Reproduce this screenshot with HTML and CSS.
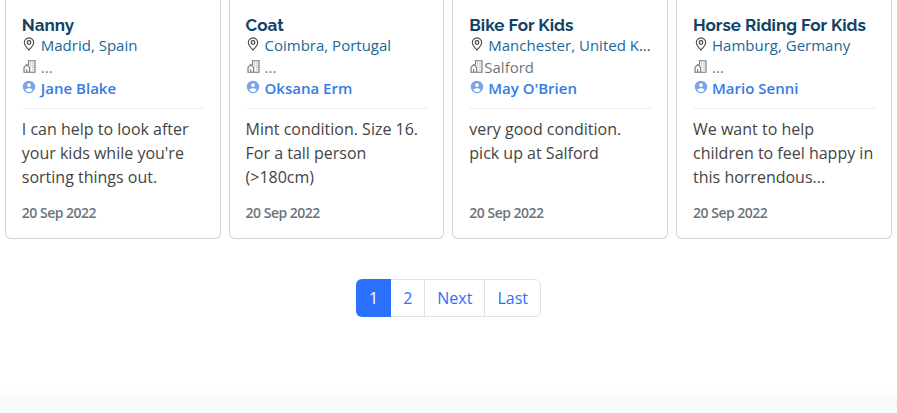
FILE: index.html
```html
<!DOCTYPE html>
<html lang="en">
<head>
<meta charset="utf-8">
<title>Listings</title>
<link rel="stylesheet" href="styles.css">
</head>
<body>
<svg class="sprite" aria-hidden="true">
  <symbol id="pin" viewBox="0 0 14 14"><path d="M7 .9a4.700 4.700 0 0 0-4.700 4.700C2.300 8.500 5.200 11.200 7 13c1.800-1.800 4.700-4.500 4.700-7.400A4.700 4.700 0 0 0 7 .9Z" fill="none" stroke="currentColor" stroke-width="1.100"/><circle cx="7" cy="5.500" r="1.800" fill="none" stroke="currentColor" stroke-width="1.200"/></symbol>
  <symbol id="building" viewBox="0 0 13 13"><path d="M5.500 5V.8h6.500v11.500H1V7.500L3.700 4.600l3 2.900v4.800M3.700 12.300V9.200" fill="none" stroke="currentColor" stroke-width="1.100"/><path d="M7.200 2.500h1v1h-1zM9.500 2.500h1v1h-1zM7.200 4.800h1v1h-1zM9.500 4.800h1v1h-1zM9.500 7.100h1v1h-1zM9.500 9.400h1v1h-1z" fill="currentColor"/></symbol>
  <symbol id="person" viewBox="0 0 14 14"><circle cx="7" cy="7" r="6.200" fill="currentColor"/><circle cx="7" cy="5.100" r="1.900" fill="#fff"/><path d="M3.300 10.200C3.800 8.700 5.500 8.200 7 8.200s3.200.5 3.700 2a4.700 4.700 0 0 1-7.400 0Z" fill="#fff"/></symbol>
</svg>
<main class="cards">
  <article class="card">
    <h2 class="title">Nanny</h2>
    <div class="meta place"><svg class="icon"><use href="#pin"/></svg><a class="label">Madrid, Spain</a></div>
    <div class="meta town"><svg class="icon"><use href="#building"/></svg><span class="label">...</span></div>
    <div class="meta owner"><svg class="icon"><use href="#person"/></svg><a class="label">Jane Blake</a></div>
    <p class="text">I can help to look after<br>your kids while you're<br>sorting things out.</p>
    <time class="date">20 Sep 2022</time>
  </article>
  <article class="card">
    <h2 class="title">Coat</h2>
    <div class="meta place"><svg class="icon"><use href="#pin"/></svg><a class="label">Coimbra, Portugal</a></div>
    <div class="meta town"><svg class="icon"><use href="#building"/></svg><span class="label">...</span></div>
    <div class="meta owner"><svg class="icon"><use href="#person"/></svg><a class="label">Oksana Erm</a></div>
    <p class="text">Mint condition. Size 16.<br>For a tall person<br>(&gt;180cm)</p>
    <time class="date">20 Sep 2022</time>
  </article>
  <article class="card">
    <h2 class="title">Bike For Kids</h2>
    <div class="meta place"><svg class="icon"><use href="#pin"/></svg><span class="label"><a>Manchester, United K</a><span class="more">...</span></span></div>
    <div class="meta town tight"><svg class="icon"><use href="#building"/></svg><span class="label">Salford</span></div>
    <div class="meta owner"><svg class="icon"><use href="#person"/></svg><a class="label">May O'Brien</a></div>
    <p class="text">very good condition.<br>pick up at Salford</p>
    <time class="date">20 Sep 2022</time>
  </article>
  <article class="card">
    <h2 class="title">Horse Riding For Kids</h2>
    <div class="meta place"><svg class="icon"><use href="#pin"/></svg><a class="label">Hamburg, Germany</a></div>
    <div class="meta town"><svg class="icon"><use href="#building"/></svg><span class="label">...</span></div>
    <div class="meta owner"><svg class="icon"><use href="#person"/></svg><a class="label">Mario Senni</a></div>
    <p class="text">We want to help<br>children to feel happy in<br>this horrendous...</p>
    <time class="date">20 Sep 2022</time>
  </article>
</main>
<nav class="pagination">
  <a class="page active">1</a><a class="page">2</a><a class="page">Next</a><a class="page">Last</a>
</nav>
<footer class="footer"></footer>
</body>
</html>
```
FILE: styles.css
```css
* { box-sizing: border-box; }
body {
  margin: 0;
  height: 413px;
  overflow: hidden;
  display: flex;
  flex-direction: column;
  background: #fff;
  color: #444;
  font: 16px/24px "Open Sans", sans-serif;
}
.sprite { display: none; }
.cards {
  display: grid;
  grid-template-columns: repeat(4, 1fr);
  gap: 8px;
  height: 239px;
  padding: 0 5.200px 0 4.800px;
}
.card {
  display: flex;
  flex-direction: column;
  min-width: 0;
  padding: 14px 15px 0 16px;
  border: 1px solid #d3d3d4;
  border-top: 0;
  border-radius: 0 0 6px 6px;
}
.title {
  margin: 0;
  height: 20px;
  color: #124265;
  font: 700 17px/23px "Raleway", "Lato", sans-serif;
  white-space: nowrap;
}
.meta {
  display: flex;
  height: 22px;
  gap: 4px;
  font-size: 15px;
  line-height: 22px;
  white-space: nowrap;
}
.meta.tight { gap: 0; }
.icon {
  flex: none;
  width: 14px;
  height: 14px;
  margin-top: 3px;
  margin-left: .5px;
  margin-right: .5px;
}
.place { color: #444; }
.place a { color: #1a6798; }
.town { height: 21px; color: #6c757d; }
.town .icon { width: 13px; height: 13px; margin: 4px 1px 0; }
.owner { height: 32px; border-bottom: 1px solid #f0f0f1; color: #367be5; font-weight: 600; }
.owner .icon { color: #75a6ef; }
.text { margin: 8px 0 12px; height: 72px; white-space: nowrap; }
.date { color: #6c757d; font-size: 14px; font-weight: 600; letter-spacing: -.5px; line-height: 24px; }
.pagination {
  display: flex;
  align-self: center;
  margin-top: 40px;
  height: 38px;
  border: 1px solid #dee2e6;
  border-radius: 6px;
}
.page { padding: 6px 12px; color: #2c70fb; }
.page + .page + .page { border-left: 1px solid #dee2e6; }
.page.active { margin: -1px 0 -1px -1px; padding: 7px 13px; background: #2c70fe; color: #fff; border-radius: 6px 0 0 6px; }
.footer { margin-top: auto; height: 29px; background: linear-gradient(#fff, #fafdfc 12px, #f6fafd 13px); }
```
